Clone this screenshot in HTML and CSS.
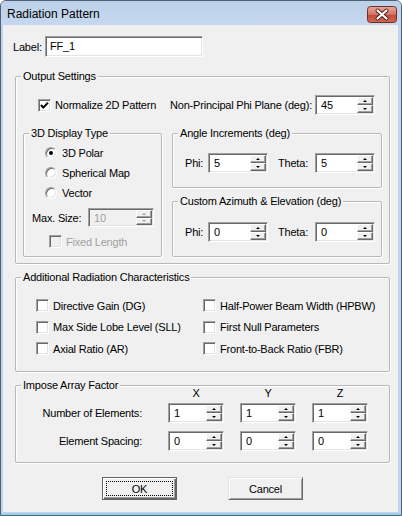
FILE: index.html
```html
<!DOCTYPE html>
<html>
<head>
<meta charset="utf-8">
<title>Radiation Pattern</title>
<link rel="stylesheet" href="styles.css">
</head>
<body>
<div class="window">
  <div class="titlebar">
    <span class="title">Radiation Pattern</span>
    <span class="close">
      <svg width="30" height="17" viewBox="0 0 30 17">
        <defs>
          <linearGradient id="cg" x1="0" y1="0" x2="0" y2="1">
            <stop offset="0" stop-color="#e9a99d"/>
            <stop offset="0.5" stop-color="#d47264"/>
            <stop offset="0.55" stop-color="#c34a3b"/>
            <stop offset="1" stop-color="#cf6a55"/>
          </linearGradient>
        </defs>
        <rect x="0.5" y="0.5" width="29" height="16" rx="3" fill="url(#cg)" stroke="#6e2d26"/>
        <path d="M10.5 4.5 L19.5 12.5 M19.5 4.5 L10.5 12.5" stroke="#4c1d18" stroke-width="4" stroke-linecap="round"/>
        <path d="M10.5 4.5 L19.5 12.5 M19.5 4.5 L10.5 12.5" stroke="#ffffff" stroke-width="2.2" stroke-linecap="round"/>
      </svg>
    </span>
  </div>
  <div class="client">
    <div class="label-row">
      <span class="lbl-name">Label:</span>
      <div class="edit">FF_1</div>
    </div>

    <div class="group g-output">
      <div class="gtitle">Output Settings</div>
      <div class="out-row1">
        <div class="opt"><span class="chk on"><svg width="11" height="11" viewBox="0 0 11 11"><polyline points="2,5 4.3,7.6 9,2.6" fill="none" stroke="#000" stroke-width="2"/></svg></span>Normalize 2D Pattern</div>
        <div class="npp">
          <span class="npp-lbl">Non-Principal Phi Plane (deg):</span>
          <div class="spin w60"><span class="val">45</span><span class="btns"><span class="sb"><i class="up"></i></span><span class="sb"><i class="dn"></i></span></span></div>
        </div>
      </div>
      <div class="out-row2">
        <div class="group g-display">
          <div class="gtitle">3D Display Type</div>
          <div class="radios">
            <div class="opt"><span class="radio on"></span>3D Polar</div>
            <div class="opt"><span class="radio"></span>Spherical Map</div>
            <div class="opt"><span class="radio"></span>Vector</div>
          </div>
          <div class="maxsize">
            <span class="ms-lbl">Max. Size:</span>
            <div class="spin w66 disabled"><span class="val">10</span><span class="btns"><span class="sb"><i class="up"></i></span><span class="sb"><i class="dn"></i></span></span></div>
          </div>
          <div class="opt fixed disabled"><span class="chk"></span>Fixed Length</div>
        </div>
        <div class="rcol">
          <div class="group g-angle">
            <div class="gtitle">Angle Increments (deg)</div>
            <div class="pt-row">
              <span class="phi-lbl">Phi:</span>
              <div class="spin w60"><span class="val">5</span><span class="btns"><span class="sb"><i class="up"></i></span><span class="sb"><i class="dn"></i></span></span></div>
              <span class="theta-lbl">Theta:</span>
              <div class="spin w60"><span class="val">5</span><span class="btns"><span class="sb"><i class="up"></i></span><span class="sb"><i class="dn"></i></span></span></div>
            </div>
          </div>
          <div class="group g-custom">
            <div class="gtitle">Custom Azimuth &amp; Elevation (deg)</div>
            <div class="pt-row">
              <span class="phi-lbl">Phi:</span>
              <div class="spin w60"><span class="val">0</span><span class="btns"><span class="sb"><i class="up"></i></span><span class="sb"><i class="dn"></i></span></span></div>
              <span class="theta-lbl">Theta:</span>
              <div class="spin w60"><span class="val">0</span><span class="btns"><span class="sb"><i class="up"></i></span><span class="sb"><i class="dn"></i></span></span></div>
            </div>
          </div>
        </div>
      </div>
    </div>

    <div class="group g-add">
      <div class="gtitle">Additional Radiation Characteristics</div>
      <div class="add-grid">
        <div class="opt"><span class="chk"></span>Directive Gain (DG)</div>
        <div class="opt"><span class="chk"></span>Half-Power Beam Width (HPBW)</div>
        <div class="opt"><span class="chk"></span>Max Side Lobe Level (SLL)</div>
        <div class="opt"><span class="chk"></span>First Null Parameters</div>
        <div class="opt"><span class="chk"></span>Axial Ratio (AR)</div>
        <div class="opt"><span class="chk"></span>Front-to-Back Ratio (FBR)</div>
      </div>
    </div>

    <div class="group g-array">
      <div class="gtitle">Impose Array Factor</div>
      <div class="arr-head">
        <span></span><span>X</span><span>Y</span><span>Z</span>
      </div>
      <div class="arr-grid">
        <span class="arr-lbl">Number of Elements:</span>
        <div class="spin w56"><span class="val">1</span><span class="btns"><span class="sb"><i class="up"></i></span><span class="sb"><i class="dn"></i></span></span></div>
        <div class="spin w56"><span class="val">1</span><span class="btns"><span class="sb"><i class="up"></i></span><span class="sb"><i class="dn"></i></span></span></div>
        <div class="spin w56"><span class="val">1</span><span class="btns"><span class="sb"><i class="up"></i></span><span class="sb"><i class="dn"></i></span></span></div>
        <span class="arr-lbl">Element Spacing:</span>
        <div class="spin w56"><span class="val">0</span><span class="btns"><span class="sb"><i class="up"></i></span><span class="sb"><i class="dn"></i></span></span></div>
        <div class="spin w56"><span class="val">0</span><span class="btns"><span class="sb"><i class="up"></i></span><span class="sb"><i class="dn"></i></span></span></div>
        <div class="spin w56"><span class="val">0</span><span class="btns"><span class="sb"><i class="up"></i></span><span class="sb"><i class="dn"></i></span></span></div>
      </div>
    </div>

    <div class="buttons">
      <div class="btn default"><span class="focus">OK</span></div>
      <div class="btn"><span class="focus-none">Cancel</span></div>
    </div>
  </div>
</div>
</body>
</html>
```
FILE: styles.css
```css
html, body {
  margin: 0;
  padding: 0;
  background: #ffffff;
}
body {
  font-family: "Liberation Sans", Arial, sans-serif;
  font-size: 11px;
  letter-spacing: -0.2px;
  color: #000;
}
.window {
  width: 402px;
  height: 516px;
  box-sizing: border-box;
  border: 1px solid #4f6178;
  border-radius: 6px 6px 0 0;
  background: #c0d5ee;
  padding: 0 3px 3px 2px;
  display: flex;
  flex-direction: column;
  overflow: hidden;
  box-shadow: inset 0 -2px #9cd0ee;
}
.titlebar {
  height: 24px;
  flex: none;
  display: flex;
  align-items: center;
  justify-content: space-between;
  margin: 0 -3px 0 -2px;
  padding-left: 6px;
  padding-right: 4px;
  background: linear-gradient(#bcd0e9, #c5d8ef);
}
.title {
  font-size: 12px;
  letter-spacing: 0;
  color: #000;
  line-height: 14px;
  padding-top: 1px;
}
.close {
  display: flex;
  width: 30px;
  height: 17px;
  margin-top: 3px;
}
.client {
  flex: 1;
  background: #f0f0f0;
  padding: 0 8px 0 12px;
  display: flex;
  flex-direction: column;
}

/* label row */
.label-row {
  display: flex;
  align-items: center;
  margin: 11px 0 0 -2px;
  height: 21px;
}
.lbl-name {
  width: 32px;
}
.edit {
  width: 158px;
  height: 21px;
  box-sizing: border-box;
  background: #fff;
  border: 1px solid;
  border-color: #a0a0a0 #ffffff #ffffff #a0a0a0;
  box-shadow: inset 1px 1px #696969, inset -1px -1px #e3e3e3;
  padding: 0 0 0 4px;
  line-height: 19px;
}

/* groups */
.group {
  box-sizing: border-box;
  border: 1px solid #b8b8b8;
  border-radius: 2px;
  box-shadow: inset 1px 1px #ffffff, 1px 1px #ffffff;
  display: flex;
  flex-direction: column;
  flex: none;
}
.gtitle {
  align-self: flex-start;
  line-height: 13px;
  height: 13px;
  margin: -7px 0 0 5px;
  padding: 0 2px;
  background: #f0f0f0;
  white-space: nowrap;
}
.g-output {
  margin-top: 19px;
  height: 188px;
}
.g-add {
  margin-top: 13px;
  height: 95px;
}
.g-array {
  margin-top: 13px;
  height: 78px;
}

/* options */
.opt {
  display: flex;
  align-items: center;
  gap: 4px;
  white-space: nowrap;
}
.chk {
  width: 13px;
  height: 13px;
  box-sizing: border-box;
  flex: none;
  background: #fff;
  border: 1px solid;
  border-color: #a0a0a0 #ffffff #ffffff #a0a0a0;
  box-shadow: inset 1px 1px #696969, inset -1px -1px #e3e3e3;
  display: flex;
  align-items: center;
  justify-content: center;
}
.chk svg {
  display: block;
}
.radio {
  width: 12px;
  height: 12px;
  box-sizing: border-box;
  flex: none;
  border-radius: 50%;
  background: #fff;
  border: 1px solid;
  border-color: #a0a0a0 #ffffff #ffffff #a0a0a0;
  box-shadow: inset 1px 1px #696969, inset -1px -1px #e3e3e3;
  display: flex;
  align-items: center;
  justify-content: center;
  margin-right: 1px;
}
.radio.on::after {
  content: "";
  width: 4px;
  height: 4px;
  border-radius: 50%;
  background: #000;
}
.disabled {
  color: #a0a0a0;
}
.disabled .chk {
  background: #f0f0f0;
}

/* spin boxes */
.spin {
  height: 20px;
  box-sizing: border-box;
  flex: none;
  display: flex;
  background: #fff;
  border: 1px solid;
  border-color: #a0a0a0 #ffffff #ffffff #a0a0a0;
  box-shadow: inset 1px 1px #696969, inset -1px -1px #e3e3e3;
  padding: 1px;
}
.spin .val {
  flex: 1;
  padding-left: 4px;
  line-height: 16px;
}
.spin .btns {
  width: 16px;
  display: flex;
  flex-direction: column;
}
.sb {
  flex: 1;
  box-sizing: border-box;
  background: #f0f0f0;
  border: 1px solid;
  border-color: #ffffff #696969 #696969 #ffffff;
  box-shadow: inset -1px -1px #a0a0a0;
  display: flex;
  align-items: center;
  justify-content: center;
}
.sb i {
  width: 0;
  height: 0;
  border-left: 2px solid transparent;
  border-right: 2px solid transparent;
  margin-right: 1px;
}
.sb i.up {
  border-bottom: 2px solid #000;
}
.sb i.dn {
  border-top: 2px solid #000;
}
.spin.disabled {
  background: #f0f0f0;
}
.spin.disabled .sb i.up {
  border-bottom-color: #a0a0a0;
}
.spin.disabled .sb i.dn {
  border-top-color: #a0a0a0;
}
.w60 { width: 60px; }
.w66 { width: 66px; }
.w56 { width: 56px; }

/* output settings */
.out-row1 {
  margin-top: 12px;
  height: 20px;
  display: flex;
  align-items: center;
  justify-content: space-between;
  padding: 0 14px 0 22px;
}
.npp {
  display: flex;
  align-items: center;
  gap: 3px;
}
.out-row2 {
  margin-top: 18px;
  display: flex;
  gap: 10px;
  padding-left: 7px;
}
.g-display {
  width: 139px;
  height: 124px;
}
.radios {
  margin-top: 3px;
  padding-left: 21px;
  display: flex;
  flex-direction: column;
}
.radios .opt {
  height: 20px;
}
.maxsize {
  margin-top: 5px;
  padding-left: 8px;
  display: flex;
  align-items: center;
  height: 19px;
}
.maxsize .spin {
  height: 19px;
}
.ms-lbl {
  width: 56px;
}
.fixed {
  margin-top: 8px;
  height: 13px;
  padding-left: 25px;
}
.rcol {
  width: 210px;
  display: flex;
  flex-direction: column;
  gap: 13px;
}
.g-angle {
  height: 55px;
}
.g-custom {
  height: 56px;
}
.pt-row {
  display: flex;
  align-items: center;
  padding-left: 12px;
  height: 20px;
}
.g-angle .pt-row {
  margin-top: 13px;
}
.g-custom .pt-row {
  margin-top: 14px;
}
.phi-lbl {
  width: 23px;
}
.theta-lbl {
  width: 37px;
  margin-left: 10px;
}

/* additional */
.add-grid {
  margin-top: 11px;
  padding-left: 20px;
  display: grid;
  grid-template-columns: 167px auto;
  grid-auto-rows: 21.5px;
}

/* array */
.arr-head, .arr-grid {
  display: grid;
  grid-template-columns: 136px 56px 56px 56px;
  column-gap: 16px;
}
.arr-head {
  margin-top: -5px;
  line-height: 13px;
  text-align: center;
}
.arr-grid {
  margin-top: 3px;
  grid-auto-rows: 20px;
  row-gap: 8px;
}
.arr-lbl {
  text-align: right;
  padding-right: 10px;
  line-height: 20px;
}

/* buttons */
.buttons {
  margin-top: 14px;
  display: flex;
  justify-content: center;
  gap: 51px;
}
.btn {
  width: 75px;
  height: 23px;
  box-sizing: border-box;
  border: 1px solid;
  border-color: #e3e3e3 #696969 #696969 #e3e3e3;
  box-shadow: inset 1px 1px #ffffff, inset -1px -1px #a0a0a0;
  background: #f0f0f0;
  display: flex;
  padding: 3px;
}
.btn.default {
  border-color: #646464;
  box-shadow: inset 1px 1px #ffffff, inset -1px -1px #646464, inset -2px -2px #a0a0a0;
}
.focus, .focus-none {
  flex: 1;
  display: flex;
  align-items: center;
  justify-content: center;
  border: 1px dotted transparent;
}
.focus {
  border-color: #000;
}
```
